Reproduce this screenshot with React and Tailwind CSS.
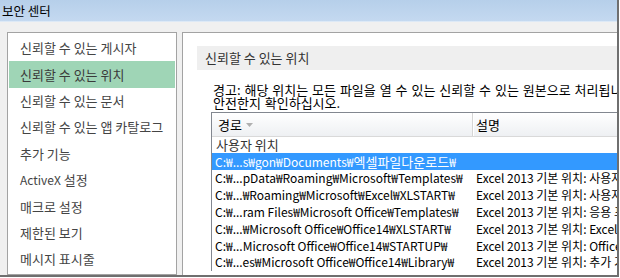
const navItems = [
  '신뢰할 수 있는 게시자',
  '신뢰할 수 있는 위치',
  '신뢰할 수 있는 문서',
  '신뢰할 수 있는 앱 카탈로그',
  '추가 기능',
  'ActiveX 설정',
  '매크로 설정',
  '제한된 보기',
  '메시지 표시줄',
];

const rows = [
  ['C:₩...pData₩Roaming₩Microsoft₩Templates₩', '사용자 서식 파일'],
  ['C:₩...₩Roaming₩Microsoft₩Excel₩XLSTART₩', '사용자 시작'],
  ['C:₩...ram Files₩Microsoft Office₩Templates₩', '응용 프로그램 서식 파일'],
  ['C:₩...₩Microsoft Office₩Office14₩XLSTART₩', 'Excel 시작'],
  ['C:₩...Microsoft Office₩Office14₩STARTUP₩', 'Office 시작'],
  ['C:₩...es₩Microsoft Office₩Office14₩Library₩', '추가 기능'],
];

const font = { fontFamily: "'Noto Sans CJK KR', sans-serif" };

// Latin in the reference runs narrower than Hangul, so Latin words get a smaller size
function NavLabel({ text }) {
  if (text.startsWith('ActiveX')) {
    return (
      <span>
        <span className="text-[12px]">ActiveX</span> 설정
      </span>
    );
  }
  return <span>{text}</span>;
}

export default function App() {
  return (
    <div className="w-[620px] h-[278px] bg-white overflow-hidden" style={font}>
      <div className="w-[619px] h-[277px] border-r-2 border-b-2 border-[#6f6f6f] bg-[#f0f0f0] flex flex-col overflow-hidden">
        {/* title bar */}
        <div className="h-[22px] shrink-0 bg-gradient-to-b from-[#b6cfea] to-[#c4d9f0] border-b border-[#dde9f6] flex items-center pl-[2px] text-[12.5px] leading-[16px] text-black">
          보안 센터
        </div>

        <div className="flex-1 flex pt-[10px] pl-[7px] min-h-0">
          {/* left nav */}
          <div className="w-[170px] shrink-0 bg-white border border-[#a3a3a3] pt-[2px] px-px">
            {navItems.map((item, i) => (
              <div
                key={item}
                className={`h-[26.4px] flex items-center pl-[11px] text-[13px] leading-[18px] whitespace-nowrap ${
                  i === 1 ? 'bg-[#9fd5b6] text-[#3a3a3a]' : 'text-[#444]'
                }`}
              >
                <NavLabel text={item} />
              </div>
            ))}
          </div>

          <div className="w-[5px] shrink-0" />

          {/* right panel */}
          <div className="flex-1 min-w-0 bg-white border-t border-l border-[#a3a3a3] pt-[13px] pl-[14px] overflow-hidden">
            <div className="h-[24px] bg-[#efefef] flex items-center pl-[8px] text-[13px] leading-[18px] text-[#333]">
              신뢰할 수 있는 위치
            </div>

            <div className="pl-[16px] pt-[13px] text-[13px] leading-[13px] [word-spacing:1px] text-black whitespace-nowrap">
              <div className="h-[13px]">경고: 해당 위치는 모든 파일을 열 수 있는 신뢰할 수 있는 원본으로 처리됩니다.</div>
              <div className="h-[13px]">안전한지 확인하십시오.</div>
            </div>

            <div className="ml-[14px] mt-[3px] border-t border-l border-[#828790] w-[460px]">
              <div className="h-[24px] flex bg-gradient-to-b from-white to-[#eef0f3] border-b border-[#d9d9d9] text-[13px] leading-[18px] text-black">
                <div className="w-[260px] shrink-0 flex items-center pl-[6px] gap-[4px]">
                  경로
                  <svg width="7" height="4" viewBox="0 0 7 4" className="mt-[1px]">
                    <path d="M0 0h7L3.5 4z" fill="#b0b0b0" />
                  </svg>
                </div>
                <div className="flex items-center pl-[3px] border-l border-[#d5d5d5] shadow-[inset_1px_0_0_#ffffff]">설명</div>
              </div>

              <div className="h-[16px] flex items-center pl-[4px] text-[13px] leading-[16px] text-[#333]">사용자 위치</div>

              <div className="h-[17px] flex items-center bg-[#3399ff] text-white text-[12px] leading-[16px] whitespace-nowrap">
                <div className="pl-[3px]">
                  C:₩...s₩gon₩Documents₩<span className="text-[13px]">엑셀파일다운로드</span>₩
                </div>
              </div>

              {rows.map(([path, desc]) => (
                <div key={path} className="h-[16.8px] flex items-center text-[12px] leading-[16px] text-black whitespace-nowrap">
                  <div className="w-[260px] shrink-0 pl-[3px] overflow-hidden">{path}</div>
                  <div className="pl-[4px]">Excel 2013 기본 위치: {desc}</div>
                </div>
              ))}
            </div>
          </div>
        </div>
      </div>
    </div>
  );
}
